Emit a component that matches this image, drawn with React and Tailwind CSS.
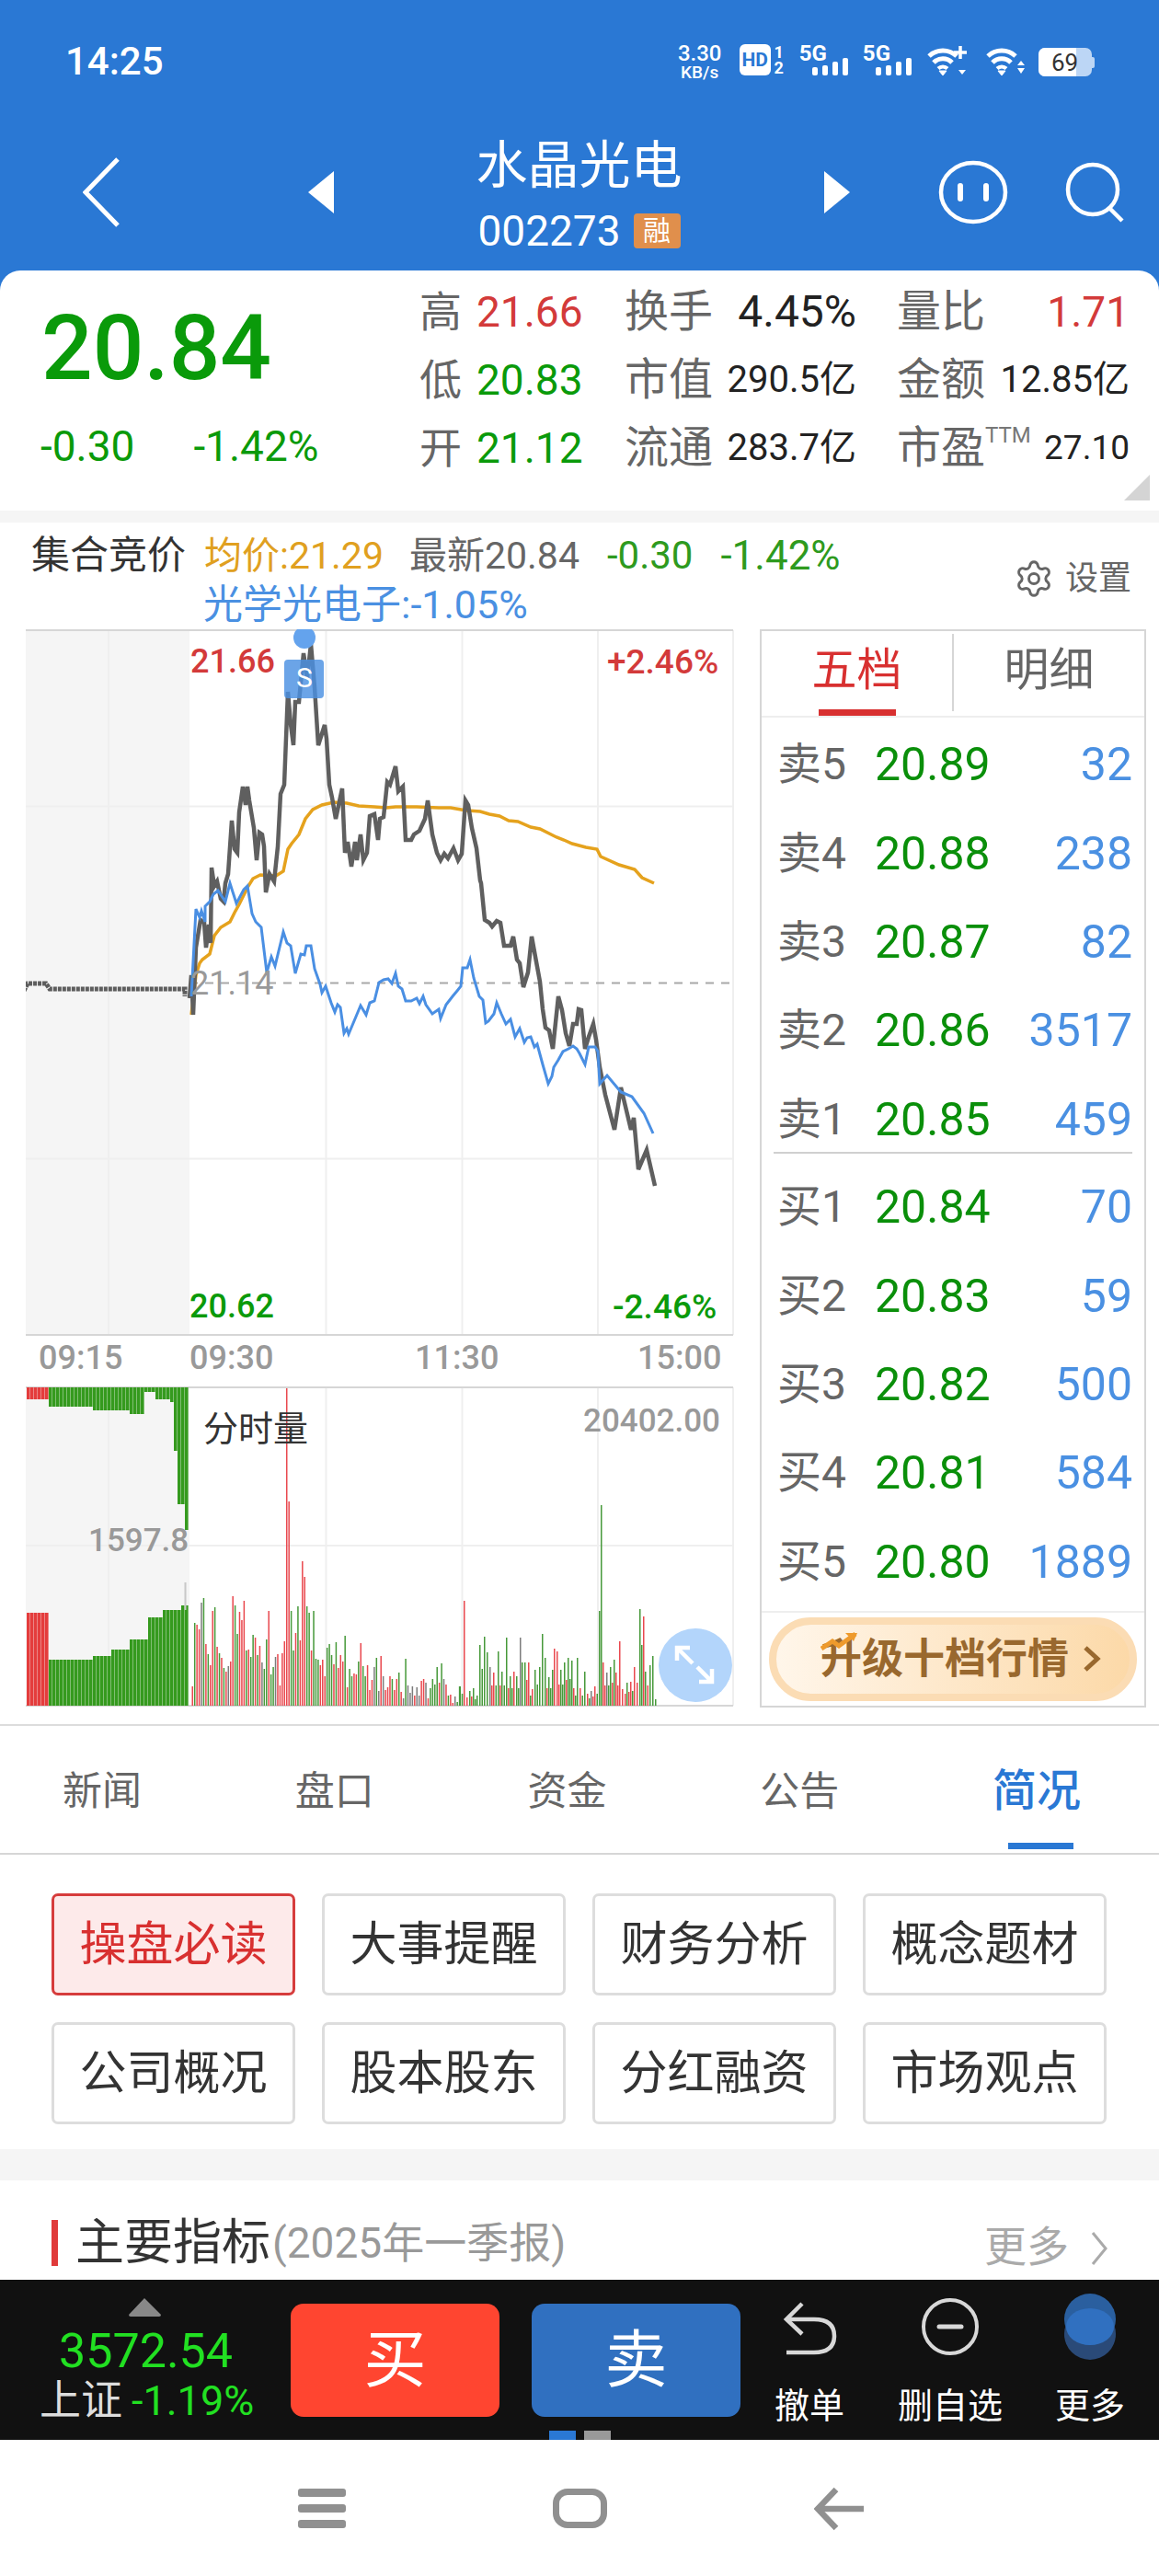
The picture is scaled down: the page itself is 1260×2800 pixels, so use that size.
import { Settings } from "lucide-react";

const grayLine =
  "206,1085 208,1060 210,1103 213,1030 218,1000 222,1003 224,1030 227,1005 229,1025 230,943 233,963 236,958 240,977 243,980 245,960 248,950 252,892 255,923 258,927 260,883 264,855 267,875 269,855 271,870 276,900 279,935 282,905 285,907 287,920 289,970 293,950 298,958 302,920 305,863 309,853 312,777 313,752 316,787 319,810 321,763 325,763 330,710 334,737 338,700 342,747 346,810 353,788 355,803 358,853 361,867 365,890 372,857 375,927 378,915 382,942 386,915 388,935 392,907 395,935 399,927 402,887 407,885 411,913 413,890 417,888 421,850 424,853 430,833 433,860 438,855 441,913 447,913 450,907 456,903 462,890 465,870 470,907 475,927 479,935 483,928 487,933 493,922 498,935 502,928 506,870 509,875 513,900 518,922 522,957 523,960 527,1000 532,1003 535,1007 540,1001 544,1003 548,1028 555,1028 558,1018 562,1043 565,1047 569,1073 574,1057 578,1018 582,1040 587,1067 590,1097 593,1117 597,1120 601,1140 607,1083 611,1098 615,1123 619,1137 623,1113 627,1113 629,1097 632,1098 636,1140 640,1127 645,1113 648,1130 652,1160 658,1190 668,1228 675,1182 686,1228 689,1215 694,1271 703,1250 712,1289";

const blueLine =
  "208,1083 213,988 217,997 219,990 223,1002 223,985 228,980 232,972 237,968 245,980 250,960 257,982 265,967 269,963 274,993 278,1002 284,1008 290,1057 295,1040 299,1050 308,1013 312,1025 316,1028 321,1058 327,1037 331,1038 333,1028 338,1028 342,1053 348,1070 350,1079 354,1072 360,1090 364,1100 367,1092 370,1095 374,1123 377,1118 379,1124 387,1105 392,1093 398,1103 402,1090 407,1088 412,1068 417,1065 422,1064 426,1069 430,1058 433,1072 437,1075 441,1088 447,1088 453,1085 456,1091 460,1083 463,1092 470,1102 477,1097 479,1107 485,1092 492,1083 497,1077 501,1072 503,1052 508,1052 511,1043 515,1063 521,1083 525,1087 528,1112 531,1110 537,1102 540,1090 545,1102 550,1113 555,1108 560,1127 565,1118 570,1133 573,1128 577,1127 581,1138 584,1135 590,1157 596,1178 600,1170 602,1160 607,1152 612,1143 618,1140 623,1137 627,1140 630,1145 636,1157 640,1138 647,1138 650,1143 652,1178 660,1169 675,1187 687,1192 700,1210 710,1232";

const avgLine =
  "208,1103 213,1060 217,1047 220,1043 228,1037 233,1017 240,1008 250,1002 255,992 260,983 270,963 275,955 283,951 300,952 308,947 313,923 317,917 325,907 332,890 340,880 350,875 363,872 377,873 390,876 407,877 420,878 430,877 453,877 477,878 490,878 507,881 522,882 532,885 543,887 553,892 563,893 577,899 587,901 605,910 613,913 622,917 637,921 649,923 653,931 673,940 690,945 698,954 711,960";

const barColors = { r: "#e9484e", g: "#47993a", h: "#7c7c7c" };

const volFirst =
  "r21 g90 r88 r83 h112 g117 r67 g56 r44 r103 g107 r64 g57 r52 g41 r37 h43 r48 r119 g109 g78 r102 r93 r114 g60 r61 g53 g77 r74 g55 r65 h47 g40 g72 r103 g34 g42 h53 r56 r22 r57 r70 r345 r222 g103 g60 r79 g108 r71 r157 r140 g108 g101 r60 g103 g51 g50 r44 r50 r32 g63 g67 g55 r45 g69 r41 r55 r48 g76 r20 g40 g32 r35 r34 g48 r68 g43 g32 r44 r17 r28 h42 g52 h16 r54 h32 r17 r20 r32 g29 r17 r29 g36 r15 h8 g51 h22 h14 h21 r11 h20 h11 r27 r29 h25 r8 g19 g29 g23 g42 r25 g46 h29 r23 g11 r12 r3 h10 g4 g21";

// page x of each bar, then colour and height
const volSecond =
  "499.5g21 504r114 507r9 510g16 514g19 518g11 521g66 526g75 529g58 532h42 536r36 541g59 545g37 550g74 554g32 558r37 561g32 565h74 567g47 570g47 574r47 578r18 581g39 586g42 589g78 592g52 596g31 600g39 602r62 605r59 609g39 613g47 617g52 621g49 623r19 627g52 630r19 635g37 638r13 642h16 646r21 651g103 653g218 655r47 659h36 663g42 667g50 669r36 673r70 676r18 679r13 681g25 685r26 689r42 695g105 697g66 699r97 701g37 706g44 709g54 712g7";

const parseBars = (text, startX, pitch) =>
  text.split(" ").map((item, index) => ({
    x: startX + index * pitch,
    h: Number(item.slice(1)),
    color: barColors[item[0]]
  }));

const parsePlacedBars = (text) => {
  const bars = text.split(" ").map((item) => {
    const match = item.match(/^([\d.]+)([rgh])(\d+)$/);
    return { x: Number(match[1]), h: Number(match[3]), color: barColors[match[2]] };
  });
  // short bars sitting between the ones that could be read off the picture
  const fillers = [];
  bars.forEach((bar, index) => {
    const next = bars[index + 1];
    if (next && next.x - bar.x >= 3.5) {
      fillers.push({
        x: (bar.x + next.x) / 2,
        h: Math.round(Math.min(bar.h, next.h) * 0.6),
        color: index % 2 ? barColors.r : barColors.g
      });
    }
  });
  return [...bars, ...fillers];
};

const volumeBars = [...parseBars(volFirst, 208.5, 2.44), ...parsePlacedBars(volSecond)];

const preTopEdge = (x) => {
  if (x < 52) return 1521;
  if (x < 100) return 1529;
  if (x < 141) return 1533;
  if (x < 157) return 1537;
  if (x < 167) return 1513;
  if (x < 183) return 1521;
  if (x < 186) return 1524;
  if (x < 190) return 1577;
  if (x < 199) return 1635;
  return 1663;
};

const preBottomEdge = (x) => {
  if (x < 52) return 1753;
  if (x < 100) return 1804;
  if (x < 120) return 1800;
  if (x < 141) return 1793;
  if (x < 158) return 1782;
  if (x < 175) return 1758;
  if (x < 195) return 1750;
  return 1745;
};

const preBars = Array.from({ length: 44 }, (_, index) => 29 + index * 4);

const sellRows = [
  ["卖5", "20.89", "32"],
  ["卖4", "20.88", "238"],
  ["卖3", "20.87", "82"],
  ["卖2", "20.86", "3517"],
  ["卖1", "20.85", "459"]
];

const buyRows = [
  ["买1", "20.84", "70"],
  ["买2", "20.83", "59"],
  ["买3", "20.82", "500"],
  ["买4", "20.81", "584"],
  ["买5", "20.80", "1889"]
];

const shortcuts = ["操盘必读", "大事提醒", "财务分析", "概念题材", "公司概况", "股本股东", "分红融资", "市场观点"];

function Signal() {
  return (
    <div className="flex items-start">
      <span className="text-[24px] leading-[20px] font-bold text-white">5G</span>
      <svg width="42" height="20" viewBox="0 0 42 20" className="-ml-[18px] mt-[15px]" fill="white">
        <rect x="2" y="10" width="6" height="9" rx="2" />
        <rect x="13" y="8" width="6" height="11" rx="2" />
        <rect x="24" y="4" width="6" height="15" rx="2" />
        <rect x="35" y="0" width="6" height="19" rx="2" />
      </svg>
    </div>
  );
}

function Wifi({ plus }) {
  return (
    <svg width="44" height="36" viewBox="0 0 44 36" fill="none" stroke="white" strokeWidth="5">
      <path d="M2 13a22 22 0 0 1 30 0" />
      <path d="M7 20a14 14 0 0 1 20 0" />
      <path d="M12 26.500a7 7 0 0 1 10 0" strokeWidth="4" />
      <path d="M13 29h8l-4 5z" fill="white" strokeWidth="1" />
      {plus ? (
        <>
          <path d="M36 2v14M29 9h14" strokeWidth="3.500" />
          <path d="M34 28h8l-4 5z" fill="white" stroke="none" />
        </>
      ) : (
        <>
          <path d="M34 23h8l-4-5z" fill="white" stroke="none" />
          <path d="M34 26h8l-4 6z" fill="white" stroke="none" />
        </>
      )}
    </svg>
  );
}

function StatusBar() {
  return (
    <div className="flex h-[140px] items-start pl-[71px] pr-[70px]">
      <span className="mt-[46px] text-[42px] leading-none font-medium text-white">14:25</span>
      <div className="ml-auto mt-[48px] flex items-start">
        <div className="flex w-[48px] flex-col items-center font-medium whitespace-nowrap text-white">
          <span className="text-[24px] leading-[21px]">3.30</span>
          <span className="mt-[1px] text-[19px] leading-[18px]">KB/s</span>
        </div>
        <div className="ml-[19px] flex h-[34px] w-[34px] items-center justify-center rounded-[6px] bg-white text-[21px] leading-none font-bold text-[#2a78d4]">
          HD
        </div>
        <div className="ml-[4px] flex w-[10px] flex-col items-center text-[18px] leading-[17px] font-bold text-white">
          <span>1</span>
          <span>2</span>
        </div>
        <div className="ml-[17px]">
          <Signal />
        </div>
        <div className="ml-[15px]">
          <Signal />
        </div>
        <div className="ml-[16px]">
          <Wifi plus />
        </div>
        <div className="ml-[20px]">
          <Wifi />
        </div>
        <div className="ml-[13px] mt-[4px] flex items-center">
          <div className="flex h-[31px] w-[58px] overflow-hidden rounded-[7px] bg-[#bcd6f5]">
            <div className="flex w-[41px] shrink-0 items-center bg-white pl-[14px] text-[26px] leading-none text-[#333]">
              69
            </div>
          </div>
          <div className="h-[12px] w-[3px] rounded-r-[2px] bg-[#bcd6f5]" />
        </div>
      </div>
    </div>
  );
}

function TitleBar() {
  return (
    <div className="flex h-[140px] items-center pl-[90px] text-white">
      <svg width="40" height="76" viewBox="0 0 40 76" fill="none" stroke="white" strokeWidth="5">
        <path d="M38 2L3 38l35 36" />
      </svg>
      <svg width="28" height="46" viewBox="0 0 28 46" fill="white" className="ml-[205px]">
        <path d="M28 0v46L0 23z" />
      </svg>
      <div className="flex w-[533px] flex-col items-center">
        <span className="text-[56px] leading-[70px]">水晶光电</span>
        <div className="mt-[13px] flex items-center">
          <span className="text-[46px] leading-[46px]">002273</span>
          <span className="ml-[14px] flex h-[38px] w-[51px] items-center justify-center rounded-[4px] bg-[#e08f4c] text-[30px] leading-none text-white">
            融
          </span>
        </div>
      </div>
      <svg width="28" height="46" viewBox="0 0 28 46" fill="white">
        <path d="M0 0v46l28-23z" />
      </svg>
      <svg width="76" height="70" viewBox="0 0 76 70" fill="none" stroke="white" className="ml-[96px]">
        <ellipse cx="38" cy="35" rx="35" ry="32" strokeWidth="4.500" />
        <path d="M24 28v14M52 28v14" strokeWidth="6" strokeLinecap="round" />
      </svg>
      <svg width="66" height="66" viewBox="0 0 66 66" fill="none" stroke="white" strokeWidth="4.500" className="ml-[62px]">
        <circle cx="30" cy="30" r="27" />
        <path d="M48 50l14 14" />
      </svg>
    </div>
  );
}

function QuoteSummary() {
  return (
    <div className="bg-[#2a78d4]">
      <div className="relative flex h-[261px] rounded-t-[22px] bg-white">
        <div className="w-[456px] shrink-0 pl-[44px]">
          <div className="mt-[30px] ml-[1px] text-[98px] leading-[110px] font-medium text-[#0a9a0a]">20.84</div>
          <div className="mt-[26px] flex text-[46px] leading-[50px] text-[#0a9a0a]">
            <span>-0.30</span>
            <span className="ml-[64px]">-1.42%</span>
          </div>
        </div>
        <div className="grid h-fit grid-cols-[223px_296px_253px] grid-rows-[74px_74px_74px] pt-[8px] text-[#666]">
          <div className="flex items-center text-[46px]">
            <span>高</span>
            <span className="ml-[16px] text-[#d33a3a]">21.66</span>
          </div>
          <div className="flex items-center pr-[44px] text-[48px]">
            <span>换手</span>
            <span className="ml-auto text-[48px] text-[#222]">4.45%</span>
          </div>
          <div className="flex items-center text-[48px]">
            <span>量比</span>
            <span className="ml-auto text-[46px] text-[#d33a3a]">1.71</span>
          </div>
          <div className="flex items-center text-[46px]">
            <span>低</span>
            <span className="ml-[16px] text-[#0a9a0a]">20.83</span>
          </div>
          <div className="flex items-center pr-[44px] text-[48px]">
            <span>市值</span>
            <span className="ml-auto text-[40px] text-[#222]">290.5亿</span>
          </div>
          <div className="flex items-center text-[48px]">
            <span>金额</span>
            <span className="ml-auto text-[40px] text-[#222]">12.85亿</span>
          </div>
          <div className="flex items-center text-[46px]">
            <span>开</span>
            <span className="ml-[16px] text-[#0a9a0a]">21.12</span>
          </div>
          <div className="flex items-center pr-[44px] text-[48px]">
            <span>流通</span>
            <span className="ml-auto text-[40px] text-[#222]">283.7亿</span>
          </div>
          <div className="flex items-center text-[48px]">
            <span>市盈</span>
            <span className="-mt-[28px] text-[24px] leading-none text-[#777]">TTM</span>
            <span className="ml-auto text-[37px] text-[#222]">27.10</span>
          </div>
        </div>
        <svg width="28" height="28" viewBox="0 0 28 28" className="absolute right-[10px] bottom-[11px]" fill="#d4d4d4">
          <path d="M28 0v28H0z" />
        </svg>
      </div>
    </div>
  );
}

function ChartLegend() {
  return (
    <div className="relative h-[116px] pl-[34px] pt-[13px]">
      <div className="flex h-[46px] items-center text-[41px] leading-none whitespace-nowrap">
        <span className="text-[42px] text-[#333]">集合竞价</span>
        <span className="ml-[20px] text-[#e0a020]">均价:21.29</span>
        <span className="ml-[28px] text-[#666]">最新20.84</span>
        <span className="ml-[30px] text-[42px] text-[#2e9a1e]">-0.30</span>
        <span className="ml-[30px] text-[44px] text-[#2e9a1e]">-1.42%</span>
      </div>
      <div className="mt-[7px] ml-[187px] flex h-[46px] items-center text-[43px] leading-none text-[#4a90e2]">
        光学光电子:-1.05%
      </div>
      <div className="absolute right-[30px] top-[39px] flex items-center text-[36px] leading-none text-[#666]">
        <Settings size={44} strokeWidth={1.6} />
        <span className="ml-[12px]">设置</span>
      </div>
    </div>
  );
}

function IntradayChart() {
  return (
    <div className="relative h-[1172px] w-[770px] shrink-0">
      <svg width="770" height="1172" viewBox="28 684 770 1172" className="block">
        <rect x="28" y="685" width="178" height="766" fill="#f5f5f5" />
        <rect x="28" y="1508" width="178" height="346" fill="#f5f5f5" />
        <g stroke="#efefef" strokeWidth="2" fill="none">
          <path d="M118 685V1451M118 1508V1854" />
          <path d="M354.500 685V1451M354.500 1508V1854" />
          <path d="M502.500 685V1451M502.500 1508V1854" />
          <path d="M650 685V1451M650 1508V1854" />
          <path d="M28 876.500H797M28 1259.500H797M28 1680H797" />
          <path d="M797 685V1451M797 1508V1854" />
        </g>
        <path d="M28 685H797M28 1451H797M28 1508H797M28 1854H797" stroke="#d6d6d6" strokeWidth="2" fill="none" />
        <path d="M206 1068.500H797" stroke="#a8a8a8" strokeWidth="2" strokeDasharray="9 8" fill="none" />

        {preBars.map((x) => (
          <g key={x}>
            <rect x={x} y="1508" width="3.600" height={preTopEdge(x) - 1508} fill={x < 52 ? "#e43c3c" : "#359a1e"} />
            <rect x={x} y={preBottomEdge(x)} width="3.600" height={1854 - preBottomEdge(x)} fill={x < 52 ? "#e43c3c" : "#359a1e"} />
          </g>
        ))}
        <rect x="200.500" y="1720" width="2" height="30" fill="#c8c8c8" />

        {volumeBars.map((bar) => (
          <rect key={bar.x} x={bar.x} y={1854 - bar.h} width="1.500" height={bar.h} fill={bar.color} />
        ))}

        <path
          d="M26 1077L30 1069H50L54 1075H201L201 1083"
          stroke="#5d5d5d"
          strokeWidth="5"
          strokeDasharray="4 1"
          fill="none"
        />
        <polyline points={avgLine} fill="none" stroke="#e5a21d" strokeWidth="3.500" />
        <polyline points={grayLine} fill="none" stroke="#5f5f5f" strokeWidth="4.500" />
        <polyline points={blueLine} fill="none" stroke="#4a8fe3" strokeWidth="3" />
        <circle cx="331" cy="693" r="12" fill="#64a3ed" />
        <rect x="309" y="717" width="43" height="42" rx="4" fill="#4a90e2" fillOpacity="0.82" />
      </svg>

      <span className="absolute left-[179px] top-[17px] text-[36px] leading-none font-medium text-[#d33a3a]">21.66</span>
      <span className="absolute left-[632px] top-[17px] text-[37px] leading-none font-medium text-[#d33a3a]">+2.46%</span>
      <span className="absolute left-[179px] top-[367px] text-[36px] leading-none text-[#999]">21.14</span>
      <span className="absolute left-[178px] top-[718px] text-[36px] leading-none font-medium text-[#0a9a0a]">20.62</span>
      <span className="absolute left-[638px] top-[718px] text-[37px] leading-none font-medium text-[#0a9a0a]">-2.46%</span>
      <span className="absolute left-[294px] top-[38px] w-[18px] text-center text-[30px] leading-none text-white">S</span>

      <span className="absolute left-[14px] top-[774px] text-[36px] leading-none font-medium text-[#999]">09:15</span>
      <span className="absolute left-[178px] top-[774px] text-[36px] leading-none font-medium text-[#999]">09:30</span>
      <span className="absolute left-[423px] top-[774px] text-[36px] leading-none font-medium text-[#999]">11:30</span>
      <span className="absolute left-[665px] top-[774px] text-[36px] leading-none font-medium text-[#999]">15:00</span>

      <span className="absolute left-[193px] top-[850px] text-[38px] leading-none text-[#333]">分时量</span>
      <span className="absolute left-[606px] top-[843px] text-[35px] leading-none font-medium text-[#999]">20402.00</span>
      <span className="absolute left-[68px] top-[973px] text-[35px] leading-none font-medium text-[#999]">1597.8</span>

      <div className="absolute left-[688px] top-[1086px] h-[80px] w-[80px] rounded-full bg-[#b3d5fb]">
        <svg width="80" height="80" viewBox="0 0 80 80" fill="none" stroke="white" strokeWidth="4.500">
          <path d="M20 21l17 17M20 35V21h14" />
          <path d="M42 42l16 16M44 58h14V44" />
        </svg>
      </div>
    </div>
  );
}

function DepthRow({ row }) {
  return (
    <div className="grid h-[96.400px] grid-cols-[106px_1fr_auto] items-center pl-[17px] pr-[13px] whitespace-nowrap">
      <span className="text-[48px] leading-none text-[#666]">{row[0]}</span>
      <span className="text-[50px] leading-none text-[#0a8f0a]">{row[1]}</span>
      <span className="text-[50px] leading-none text-[#4a90e2]">{row[2]}</span>
    </div>
  );
}

function DepthPanel() {
  return (
    <div className="ml-[28px] h-[1172px] w-[420px] shrink-0 border-2 border-[#d6d6d6]">
      <div className="flex h-[94px] border-b-2 border-[#eeeeee]">
        <div className="flex w-[207px] flex-col items-center">
          <span className="mt-[14px] text-[49px] leading-[58px] text-[#d83030]">五档</span>
          <div className="mt-auto h-[7px] w-[84px] bg-[#d83030]" />
        </div>
        <div className="mt-[3px] h-[84px] w-[2px] bg-[#d6d6d6]" />
        <div className="flex flex-1 justify-center">
          <span className="mt-[14px] text-[49px] leading-[58px] text-[#666]">明细</span>
        </div>
      </div>
      <div className="h-[474px]">
        <div className="mx-[13px] h-[474px] border-b-2 border-[#d0d0d0]" />
        <div className="-mt-[471px]">
          {sellRows.map((row) => (
            <DepthRow key={row[0]} row={row} />
          ))}
        </div>
      </div>
      <div className="mt-[10px]">
        {buyRows.map((row) => (
          <DepthRow key={row[0]} row={row} />
        ))}
      </div>
      <div className="mt-[5px] h-[99px] border-t-2 border-[#eeeeee] px-[8px] pt-[5px]">
        <div className="flex h-[91px] items-center rounded-full border-[8px] border-[#fbdcb4] bg-gradient-to-r from-[#fff6ea] to-[#fcd9a8] pl-[48px]">
          <span className="relative text-[45px] leading-none font-semibold text-[#99682e]">
            升级十档行情
            <svg width="42" height="22" viewBox="0 0 42 22" className="absolute -top-[9px] left-0" fill="none" stroke="#ee9a2c" strokeWidth="5">
              <path d="M1 20l12-8 7 5L38 4" />
              <path d="M27 3h13l-4 9" fill="#ee9a2c" stroke="none" />
            </svg>
          </span>
          <svg width="20" height="30" viewBox="0 0 20 30" fill="none" stroke="#99682e" strokeWidth="5" className="ml-[15px]">
            <path d="M3 3l13 12L3 27" />
          </svg>
        </div>
      </div>
    </div>
  );
}

function SectionTabs() {
  return (
    <div className="border-t-2 border-[#dcdcdc]">
      <div className="flex h-[140px] justify-between border-b-2 border-[#d6d6d6] pl-[68px] pr-[85px]">
        <span className="mt-[41px] text-[43px] leading-[60px] text-[#666]">新闻</span>
        <span className="mt-[41px] text-[43px] leading-[60px] text-[#666]">盘口</span>
        <span className="mt-[41px] text-[43px] leading-[60px] text-[#666]">资金</span>
        <span className="mt-[41px] text-[43px] leading-[60px] text-[#666]">公告</span>
        <div className="flex flex-col items-center">
          <span className="mt-[41px] text-[48px] leading-[60px] font-medium text-[#2a78d4]">简况</span>
          <div className="mt-auto mb-[4px] ml-[10px] h-[7px] w-[71px] bg-[#2a78d4]" />
        </div>
      </div>
    </div>
  );
}

function Shortcuts() {
  return (
    <div className="grid h-[320px] grid-cols-[265px_265px_265px_265px] content-start gap-x-[29px] gap-y-[29px] pl-[56px] pt-[42px]">
      {shortcuts.map((label, index) => (
        <div
          key={label}
          className={
            index === 0
              ? "flex h-[111px] items-center justify-center rounded-[7px] border-[3px] border-[#d63c3c] bg-[#fdeaea] text-[51px] leading-none text-[#d83030]"
              : "flex h-[111px] items-center justify-center rounded-[7px] border-[3px] border-[#dddddd] bg-white text-[51px] leading-none text-[#333]"
          }
        >
          {label}
        </div>
      ))}
    </div>
  );
}

function Indicators() {
  return (
    <div className="h-[142px] overflow-hidden border-t-[34px] border-[#f5f5f5] bg-white">
      <div className="mt-[43px] flex h-[50px] items-center pl-[56px] pr-[55px]">
        <div className="h-[50px] w-[7px] bg-[#e03a3a]" />
        <span className="ml-[19px] text-[53px] leading-none text-[#333]">主要指标</span>
        <span className="ml-[2px] text-[46px] leading-none text-[#999]">(2025年一季报)</span>
        <span className="ml-auto mt-[7px] text-[46px] leading-none text-[#aaa]">更多</span>
        <svg width="20" height="40" viewBox="0 0 20 40" fill="none" stroke="#aaa" strokeWidth="3" className="ml-[23px] mt-[12px]">
          <path d="M3 3l14 17L3 37" />
        </svg>
      </div>
    </div>
  );
}

function ActionBar() {
  return (
    <div className="relative flex h-[174px] bg-[#111] text-white">
      <div className="flex w-[316px] shrink-0 flex-col pt-[20px]">
        <svg width="37" height="20" viewBox="0 0 37 20" fill="#888" className="ml-[139px]">
          <path d="M18 0l18 18q0 2-2 2H3q-2 0-2-2z" />
        </svg>
        <span className="ml-[64px] mt-[15px] text-[52px] leading-[46px] text-[#22e022]">3572.54</span>
        <div className="ml-[43px] mt-[8px] flex items-center text-[45px] leading-[46px] whitespace-nowrap">
          <span className="text-[#ddd]">上证</span>
          <span className="ml-[10px] text-[#22e022]">-1.19%</span>
        </div>
      </div>
      <div className="mt-[26px] flex h-[123px] w-[227px] items-center justify-center rounded-[14px] bg-[#ff4530] text-[68px] leading-none">
        买
      </div>
      <div className="ml-[35px] mt-[26px] flex h-[123px] w-[227px] items-center justify-center rounded-[14px] bg-[#3070c0] text-[68px] leading-none">
        卖
      </div>
      <div className="ml-[37px] flex w-[76px] flex-col items-center pt-[24px]">
        <svg width="60" height="58" viewBox="0 0 60 58" fill="none" stroke="#d8d8d8" strokeWidth="4.500">
          <path d="M22 2L5 19l17 16" />
          <path d="M5 19h30q22 0 22 18t-22 18H5" />
        </svg>
        <span className="mt-[35px] text-[38px] leading-[40px] whitespace-nowrap">撤单</span>
      </div>
      <div className="ml-[58px] flex w-[114px] flex-col items-center pt-[20px]">
        <svg width="64" height="62" viewBox="0 0 64 62" fill="none" stroke="#d8d8d8" strokeWidth="4">
          <circle cx="32" cy="31" r="29" />
          <path d="M20 31h24" strokeWidth="5" strokeLinecap="round" />
        </svg>
        <span className="mt-[35px] text-[38px] leading-[40px] whitespace-nowrap">删自选</span>
      </div>
      <div className="ml-[57px] flex w-[76px] flex-col items-center pt-[15px]">
        <svg width="58" height="72" viewBox="0 0 58 72" className="shrink-0">
          <circle cx="29" cy="44" r="28" fill="#2a4a78" />
          <circle cx="29" cy="28" r="28" fill="#2a5f9f" />
          <ellipse cx="29" cy="36" rx="26" ry="20" fill="#3070c0" />
        </svg>
        <span className="mt-[30px] text-[38px] leading-[40px] whitespace-nowrap">更多</span>
      </div>
      <div className="absolute bottom-0 left-[597px] flex gap-[9px]">
        <div className="h-[10px] w-[29px] bg-[#2a78d4]" />
        <div className="h-[10px] w-[29px] bg-[#999]" />
      </div>
    </div>
  );
}

function NavBar() {
  return (
    <div className="flex h-[148px] items-start bg-white pt-[53px] pl-[324px]">
      <div className="flex h-[43px] w-[52px] flex-col justify-between">
        <div className="h-[9px] rounded-[3px] bg-[#909090]" />
        <div className="h-[9px] rounded-[3px] bg-[#909090]" />
        <div className="h-[9px] rounded-[3px] bg-[#909090]" />
      </div>
      <div className="ml-[225px] h-[43px] w-[59px] rounded-[16px] border-[7px] border-[#909090]" />
      <svg width="54" height="48" viewBox="0 0 54 48" fill="none" stroke="#909090" strokeWidth="6.500" className="ml-[225px] -mt-[2px]">
        <path d="M24 3L4 24l20 21" />
        <path d="M6 24h47" strokeLinecap="round" />
      </svg>
    </div>
  );
}

export default function App() {
  return (
    <div className="h-[2800px] w-[1260px] overflow-hidden bg-white font-['Roboto','Noto_Sans_CJK_SC',sans-serif]">
      <div className="h-[294px] bg-[#2a78d4]">
        <StatusBar />
        <div className="-mt-[1px]">
          <TitleBar />
        </div>
      </div>
      <QuoteSummary />
      <div className="h-[13px] bg-[#f5f5f5]" />
      <ChartLegend />
      <div className="flex h-[1190px] pl-[28px]">
        <IntradayChart />
        <DepthPanel />
      </div>
      <SectionTabs />
      <Shortcuts />
      <Indicators />
      <ActionBar />
      <NavBar />
    </div>
  );
}
